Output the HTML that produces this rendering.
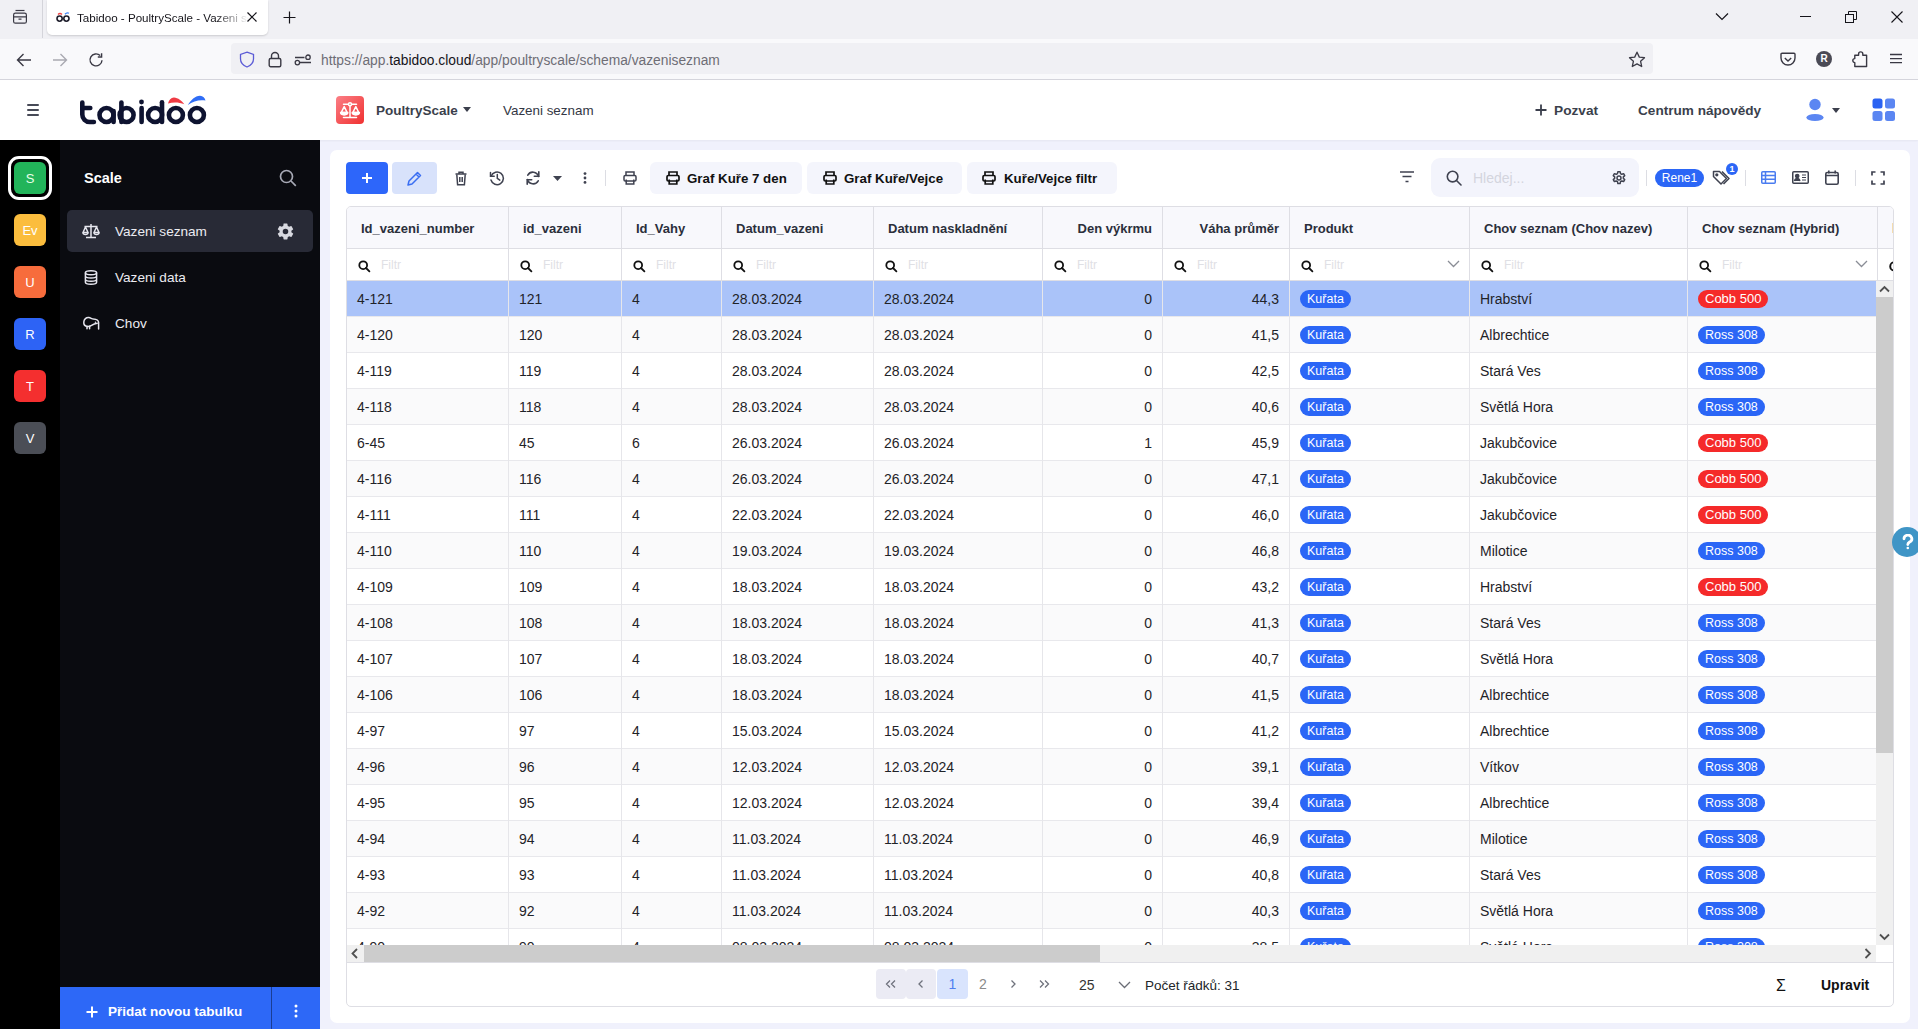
<!DOCTYPE html>
<html><head><meta charset="utf-8">
<style>
*{box-sizing:border-box;margin:0;padding:0}
html,body{width:1918px;height:1029px;overflow:hidden;font-family:"Liberation Sans",sans-serif;background:#f0f1fc;color:#212529}
.abs{position:absolute}
svg{display:block}
/* browser chrome */
#tabbar{position:absolute;left:0;top:0;width:1918px;height:39px;background:#f0f0f4}
#navbar{position:absolute;left:0;top:39px;width:1918px;height:41px;background:#f9f9fb;border-bottom:1px solid #d5d5dc}
#tab{position:absolute;left:47px;top:0;width:221px;height:35px;background:#fff;border-radius:0 0 5px 5px;box-shadow:0 1px 2px rgba(0,0,0,.15)}
#url{position:absolute;left:231px;top:43px;width:1422px;height:31px;background:#f0f0f4;border-radius:4px}
/* app header */
#apphdr{position:absolute;left:0;top:80px;width:1918px;height:60px;background:#fff;box-shadow:0 1px 2px rgba(0,0,0,.05)}
/* sidebar */
#strip{position:absolute;left:0;top:140px;width:60px;height:889px;background:#000}
#side{position:absolute;left:60px;top:140px;width:260px;height:889px;background:#0a0b10}
.appic{position:absolute;left:14px;width:32px;height:32px;border-radius:6px;color:#fff;font-size:13px;text-align:center;line-height:34px}
/* card */
#card{position:absolute;left:330px;top:150px;width:1580px;height:873px;background:#fff;border-radius:7px}
.hd{font-size:13px;font-weight:bold;color:#2b2f3b;line-height:18px;white-space:nowrap}
.flt{font-size:12px;color:#dfe0e5;line-height:18px}
.td{font-size:14px;color:#1f2328;line-height:18px;white-space:nowrap}
.badge{height:18px;border-radius:9px;color:#fff;font-size:12.5px;line-height:18px;padding:0 7px;white-space:nowrap}
.pg{height:30px;border-radius:4px;text-align:center;line-height:30px;font-size:14px}
.tbt{font-size:13.3px;font-weight:bold;color:#111;line-height:18px;white-space:nowrap}
</style></head>
<body>

<div id="tabbar"></div>
<svg class="abs" style="left:12px;top:9px" width="16" height="16" viewBox="0 0 16 16" fill="none" stroke="#3a3944" stroke-width="1.2"><path d="M3.5 1.5h9"/><rect x="1.6" y="4.2" width="12.8" height="10" rx="1.8"/><path d="M1.6 7.8h12.8M6.5 10.2h3"/></svg>
<div class="abs" style="left:42px;top:0;width:1px;height:38px;background:#d4d4da"></div>
<div id="tab"></div>
<svg class="abs" style="left:56px;top:11px" width="14" height="12" viewBox="0 0 14 12"><path d="M2 3.5 Q4 1.5 6 3.5" stroke="#ef4444" stroke-width="1.3" fill="none"/><path d="M9 3.2 Q11 1 13 2.3" stroke="#3b82f6" stroke-width="1.3" fill="none"/><circle cx="3.6" cy="7.6" r="2.6" stroke="#1d1d2b" stroke-width="1.6" fill="none"/><circle cx="10.4" cy="7.6" r="2.6" stroke="#1d1d2b" stroke-width="1.6" fill="none"/></svg>
<div class="abs" style="left:77px;top:10px;width:172px;height:16px;overflow:hidden;white-space:nowrap;font-size:11.6px;color:#15141a;line-height:16px;-webkit-mask-image:linear-gradient(90deg,#000 80%,transparent 100%)">Tabidoo - PoultryScale - Vazeni seznam</div>
<svg class="abs" style="left:246px;top:11px" width="12" height="12" viewBox="0 0 12 12" stroke="#15141a" stroke-width="1.2"><path d="M1.5 1.5l9 9M10.5 1.5l-9 9"/></svg>
<svg class="abs" style="left:283px;top:11px" width="13" height="13" viewBox="0 0 13 13" stroke="#15141a" stroke-width="1.2"><path d="M6.5 0.5v12M0.5 6.5h12"/></svg>
<svg class="abs" style="left:1715px;top:12px" width="14" height="9" viewBox="0 0 14 9" fill="none" stroke="#15141a" stroke-width="1.2"><path d="M1 1.5l6 6 6-6"/></svg>
<div class="abs" style="left:1800px;top:16px;width:11px;height:1px;background:#15141a"></div>
<svg class="abs" style="left:1845px;top:11px" width="12" height="12" viewBox="0 0 12 12" fill="none" stroke="#15141a" stroke-width="1"><rect x="0.5" y="3.5" width="8" height="8"/><path d="M3.5 3.5V0.5h8v8h-3"/></svg>
<svg class="abs" style="left:1891px;top:11px" width="12" height="12" viewBox="0 0 12 12" stroke="#15141a" stroke-width="1.1"><path d="M0.5 0.5l11 11M11.5 0.5l-11 11"/></svg>
<div id="navbar"></div>
<svg class="abs" style="left:16px;top:52px" width="16" height="16" viewBox="0 0 16 16" fill="none" stroke="#3a3944" stroke-width="1.4"><path d="M15 8H1.5M7.5 2L1.5 8l6 6"/></svg>
<svg class="abs" style="left:52px;top:52px" width="16" height="16" viewBox="0 0 16 16" fill="none" stroke="#a9a9b1" stroke-width="1.4"><path d="M1 8h13.5M8.5 2l6 6-6 6"/></svg>
<svg class="abs" style="left:88px;top:52px" width="16" height="16" viewBox="0 0 16 16" fill="none" stroke="#3a3944" stroke-width="1.4"><path d="M14 8.2A6 6 0 1 1 12.2 3.6"/><path d="M13.6 1.2v3.8H9.8" /></svg>
<div id="url"></div>
<svg class="abs" style="left:239px;top:51px" width="16" height="17" viewBox="0 0 16 17" fill="none" stroke="#5b5bd6" stroke-width="1.3"><path d="M8 1.2L14.5 3.5V8c0 4-3 6.5-6.5 8C4.5 14.5 1.5 12 1.5 8V3.5z"/></svg>
<svg class="abs" style="left:268px;top:51px" width="14" height="17" viewBox="0 0 14 17" fill="none" stroke="#3a3944" stroke-width="1.4"><path d="M3.5 7.5V5a3.5 3.5 0 0 1 7 0v2.5"/><rect x="1.2" y="7.5" width="11.6" height="8.3" rx="1.5"/></svg>
<svg class="abs" style="left:294px;top:54px" width="18" height="12" viewBox="0 0 18 12" fill="none" stroke="#3a3944" stroke-width="1.3"><path d="M1 3.5h9.5M6 8.5h11"/><circle cx="14" cy="3.2" r="2.2"/><circle cx="3.4" cy="8.6" r="2.2"/></svg>
<div class="abs" style="left:321px;top:52px;font-size:13.8px;line-height:18px;white-space:nowrap;color:#6e6d75"><span>https://app.</span><span style="color:#15141a">tabidoo.cloud</span><span>/app/poultryscale/schema/vazeniseznam</span></div>
<svg class="abs" style="left:1628px;top:51px" width="18" height="17" viewBox="0 0 18 17" fill="none" stroke="#3a3944" stroke-width="1.3" stroke-linejoin="round"><path d="M9 1.2l2.3 4.9 5.2.6-3.9 3.6 1.1 5.2L9 12.9l-4.7 2.6 1.1-5.2L1.5 6.7l5.2-.6z"/></svg>
<svg class="abs" style="left:1780px;top:52px" width="16" height="15" viewBox="0 0 16 15" fill="none" stroke="#3a3944" stroke-width="1.4"><path d="M2 1.2h12a1 1 0 0 1 1 1V6a7 7 0 0 1-14 0V2.2a1 1 0 0 1 1-1z"/><path d="M4.8 6l3.2 3 3.2-3"/></svg>
<div class="abs" style="left:1816px;top:51px;width:16px;height:16px;border-radius:50%;background:#4a4a55;color:#fff;font-size:10px;font-weight:bold;text-align:center;line-height:16px">R</div>
<svg class="abs" style="left:1852px;top:50px" width="17" height="18" viewBox="0 0 17 18" fill="none" stroke="#3a3944" stroke-width="1.4" stroke-linejoin="round"><path d="M2.8 16.5V12.6A2 2 0 0 1 2.8 8.6V5.2H6.6V4A2.1 2.1 0 0 1 10.8 4V5.2H14.6V16.5Z"/></svg>
<svg class="abs" style="left:1889px;top:53px" width="14" height="12" viewBox="0 0 14 12" stroke="#3a3944" stroke-width="1.3"><path d="M1 1.5h12M1 5.6h12M1 9.7h12"/></svg>
<div id="apphdr"></div>
<div class="abs" style="left:27px;top:104px;width:12px;height:2px;background:#474a57;border-radius:1px"></div>
<div class="abs" style="left:27px;top:109px;width:12px;height:2px;background:#474a57;border-radius:1px"></div>
<div class="abs" style="left:27px;top:114px;width:12px;height:2px;background:#474a57;border-radius:1px"></div>
<svg class="abs" style="left:78px;top:93px" width="132" height="36" viewBox="78 93 132 36" fill="none" stroke="#0e1330" stroke-width="4.6" stroke-linecap="round">
<path d="M82.3 102.5V114.5a7.5 7.5 0 0 0 7.5 7.5H93.9"/><path d="M82.3 108H90.3"/>
<circle cx="106.5" cy="115" r="7"/><path d="M113.6 111V122"/>
<path d="M121.4 102.5V122"/><circle cx="126.6" cy="115" r="7"/>
<path d="M141.6 108V122"/><circle cx="141.5" cy="102" r="2.4" fill="#0e1330" stroke="none"/>
<circle cx="155.1" cy="115" r="7"/><path d="M162 102.3V122"/>
<circle cx="175.9" cy="115" r="7"/>
<circle cx="196.9" cy="115" r="7"/>
<path d="M168 103.5C169 100 171 97.5 174 97.6C178 97.8 182 101 184.3 104.3C179 102 173 102 168 103.5Z" fill="#ef3b44" stroke="none"/>
<path d="M187.8 105C191 100 195 96 200 95.8C203 95.8 205 98 205.5 100.6C200 99.5 193 101 187.8 105Z" fill="#2f6df6" stroke="none"/>
</svg>
<div class="abs" style="left:336px;top:96px;width:28px;height:28px;border-radius:4px;background:linear-gradient(135deg,#fb7f86,#f03030)"></div>
<svg class="abs" style="left:338px;top:98px" width="24" height="24" viewBox="0 0 24 24" fill="none" stroke="#fff" stroke-width="1.5" stroke-linejoin="round" stroke-linecap="round"><path d="M5.5 6.2h13M12 7.5v11.5M5.5 19.4h13"/><circle cx="12" cy="6.2" r="1.5" fill="#f25a5a"/><path d="M6.2 8.6L3.2 14.6h6z M17.8 8.6l-3 6h6z"/><path d="M2.6 14.6h7.2a3.6 2.3 0 0 1-7.2 0z M14.2 14.6h7.2a3.6 2.3 0 0 1-7.2 0z" fill="#fff"/></svg>
<div class="abs" style="left:376px;top:102px;font-size:13.5px;font-weight:bold;color:#3b3f4c;line-height:18px;white-space:nowrap">PoultryScale</div>
<svg class="abs" style="left:463px;top:107px" width="8" height="5" viewBox="0 0 8 5"><path d="M0 0h8L4 5z" fill="#3b3f4c"/></svg>
<div class="abs" style="left:503px;top:102px;font-size:13.4px;color:#333744;line-height:18px;white-space:nowrap">Vazeni seznam</div>
<svg class="abs" style="left:1535px;top:104px" width="12" height="12" viewBox="0 0 12 12" stroke="#3b3f4c" stroke-width="1.8"><path d="M6 0.5v11M0.5 6h11"/></svg>
<div class="abs" style="left:1554px;top:102px;font-size:13.7px;font-weight:bold;color:#3b3f4c;line-height:18px;white-space:nowrap">Pozvat</div>
<div class="abs" style="left:1638px;top:102px;font-size:13.6px;font-weight:bold;color:#3b3f4c;line-height:18px;white-space:nowrap">Centrum nápovědy</div>
<svg class="abs" style="left:1805px;top:98px" width="20" height="24" viewBox="0 0 20 24" fill="#5b86f2"><circle cx="10" cy="6.5" r="5.7"/><ellipse cx="10" cy="19.5" rx="8.6" ry="3.6"/></svg>
<svg class="abs" style="left:1832px;top:108px" width="8" height="5" viewBox="0 0 8 5"><path d="M0 0h8L4 5z" fill="#3b3f4c"/></svg>
<svg class="abs" style="left:1872px;top:98px" width="24" height="24" viewBox="0 0 24 24"><rect x="0.5" y="0.5" width="10" height="10" rx="2.5" fill="#2a62f2"/><rect x="13" y="0.5" width="10" height="10" rx="2.5" fill="#5b86f2"/><rect x="0.5" y="13" width="10" height="10" rx="2.5" fill="#5b86f2"/><rect x="13" y="13" width="10" height="10" rx="2.5" fill="#5b86f2"/></svg>
<div id="strip"></div>
<div class="abs" style="left:8px;top:156px;width:44px;height:44px;border:3px solid #fff;border-radius:11px"></div>
<div class="appic" style="top:162px;background:#22b45a;color:#e8ffe8">S</div>
<div class="appic" style="top:214px;background:#fbbd3d">Ev</div>
<div class="appic" style="top:266px;background:#f76c3c">U</div>
<div class="appic" style="top:318px;background:#2d63f5">R</div>
<div class="appic" style="top:370px;background:#f42f2f">T</div>
<div class="appic" style="top:422px;background:#4b4e56">V</div>
<div id="side"></div>
<div class="abs" style="left:84px;top:169px;font-size:14.5px;font-weight:bold;color:#fff;line-height:18px">Scale</div>
<svg class="abs" style="left:279px;top:169px" width="18" height="18" viewBox="0 0 18 18" fill="none" stroke="#a7a9b5" stroke-width="1.7"><circle cx="7.5" cy="7.5" r="6"/><path d="M12 12l4.8 4.8"/></svg>
<div class="abs" style="left:67px;top:210px;width:246px;height:42px;border-radius:5px;background:#282a36"></div>
<svg class="abs" style="left:82px;top:223px" width="18" height="16" viewBox="0 0 18 16" fill="none" stroke="#e6e6ee" stroke-width="1.5" stroke-linejoin="round"><path d="M9 1v13M4 14.5h10M2.5 3.5h13"/><path d="M3.5 4L1 9.5h5z M14.5 4L12 9.5h5z"/><path d="M1 9.5a2.5 2 0 0 0 5 0M12 9.5a2.5 2 0 0 0 5 0"/></svg>
<div class="abs" style="left:115px;top:223px;font-size:13.6px;color:#ececf2;line-height:18px;white-space:nowrap">Vazeni seznam</div>
<svg class="abs" style="left:276px;top:222px" width="19" height="19" viewBox="0 0 24 24" fill="#d8d9e0"><path d="M19.4 13c.04-.33.06-.66.06-1s-.02-.67-.06-1l2.1-1.65c.19-.15.24-.42.12-.64l-2-3.46c-.12-.22-.39-.3-.61-.22l-2.49 1c-.52-.4-1.08-.73-1.69-.98l-.38-2.65A.49.49 0 0 0 14 2h-4c-.25 0-.46.18-.49.42l-.38 2.65c-.61.25-1.17.59-1.69.98l-2.49-1c-.23-.09-.49 0-.61.22l-2 3.46c-.13.22-.07.49.12.64L4.57 11c-.04.33-.07.67-.07 1s.03.67.07 1l-2.11 1.65c-.19.15-.24.42-.12.64l2 3.46c.12.22.39.3.61.22l2.49-1c.52.4 1.08.73 1.69.98l.38 2.65c.03.24.24.42.49.42h4c.25 0 .46-.18.49-.42l.38-2.65c.61-.25 1.17-.59 1.69-.98l2.49 1c.23.09.49 0 .61-.22l2-3.46c.12-.22.07-.49-.12-.64L19.4 13zM12 15.5A3.5 3.5 0 1 1 12 8.5a3.5 3.5 0 0 1 0 7z"/></svg>
<svg class="abs" style="left:84px;top:270px" width="14" height="15" viewBox="0 0 14 15" fill="none" stroke="#e6e6ee" stroke-width="1.5"><ellipse cx="7" cy="2.8" rx="5.6" ry="2"/><path d="M1.4 2.8v9.4c0 1.1 2.5 2 5.6 2s5.6-.9 5.6-2V2.8M1.4 6c0 1.1 2.5 2 5.6 2s5.6-.9 5.6-2M1.4 9.2c0 1.1 2.5 2 5.6 2s5.6-.9 5.6-2"/></svg>
<div class="abs" style="left:115px;top:269px;font-size:13.6px;color:#ececf2;line-height:18px;white-space:nowrap">Vazeni data</div>
<svg class="abs" style="left:80px;top:312px" width="24" height="22" viewBox="0 0 24 22" fill="none" stroke="#e6e6ee" stroke-width="1.5" stroke-linejoin="round" stroke-linecap="round"><path d="M7.5 14.5C4.8 14.2 3.6 12 3.8 10 4 7.2 6.2 5.3 8.8 5.6 10.6 5.8 11.6 6.8 13.5 7.1 15.5 7.3 18.3 7.6 18.6 10.3V17"/><path d="M17.2 11.2C15 11.4 13.2 12.2 11.5 13.4 10.3 14.2 9 14.6 7.5 14.5"/><path d="M7 14.5V16.8M9.6 14.3V16.8"/><circle cx="15.4" cy="10.3" r=".7" fill="#e6e6ee" stroke="none"/></svg>
<div class="abs" style="left:115px;top:315px;font-size:13.6px;color:#ececf2;line-height:18px;white-space:nowrap">Chov</div>
<div class="abs" style="left:60px;top:987px;width:260px;height:42px;background:#2d68f7"></div>
<div class="abs" style="left:271px;top:987px;width:1px;height:42px;background:#1a3d94"></div>
<svg class="abs" style="left:86px;top:1006px" width="12" height="12" viewBox="0 0 12 12" stroke="#fff" stroke-width="2"><path d="M6 0.5v11M0.5 6h11"/></svg>
<div class="abs" style="left:108px;top:1003px;font-size:13.5px;font-weight:bold;color:#fff;line-height:18px;white-space:nowrap">Přidat novou tabulku</div>
<svg class="abs" style="left:293px;top:1004px" width="6" height="14" viewBox="0 0 6 14" fill="#fff"><circle cx="3" cy="2" r="1.5"/><circle cx="3" cy="7" r="1.5"/><circle cx="3" cy="12" r="1.5"/></svg>
<div id="card"></div>
<!--TOOLBAR-->
<div class="abs" style="left:346px;top:162px;width:42px;height:32px;border-radius:4px;background:#2d66fa"></div>
<svg class="abs" style="left:362px;top:173px" width="10" height="10" viewBox="0 0 10 10" stroke="#fff" stroke-width="2"><path d="M5 0v10M0 5h10"/></svg>
<div class="abs" style="left:392px;top:162px;width:45px;height:32px;border-radius:4px;background:#d8e2fb"></div>
<svg class="abs" style="left:407px;top:171px" width="15" height="15" viewBox="0 0 15 15" fill="none" stroke="#3a6ef2" stroke-width="1.5" stroke-linejoin="round"><path d="M10.5 1.5l3 3-8.5 8.5-4 1 1-4z M9 3l3 3"/></svg>
<svg class="abs" style="left:455px;top:171px" width="12" height="15" viewBox="0 0 12 15" fill="none" stroke="#3f4250" stroke-width="1.5"><path d="M0.5 3h11M4 3V1.2h4V3"/><path d="M1.8 3.5l.8 10.3h6.8l.8-10.3"/><path d="M4.8 6v5M7.2 6v5"/></svg>
<svg class="abs" style="left:489px;top:170px" width="16" height="16" viewBox="0 0 16 16" fill="none" stroke="#3f4250" stroke-width="1.5" stroke-linecap="round"><path d="M2.2 6A6.3 6.3 0 1 1 2 10"/><path d="M1.5 2.5V6.2h3.7"/><path d="M8.3 4.5V8.3l2.5 1.8"/></svg>
<svg class="abs" style="left:525px;top:170px" width="16" height="16" viewBox="0 0 16 16" fill="none" stroke="#3f4250" stroke-width="1.6" stroke-linecap="round"><path d="M13.5 6.5A5.8 5.8 0 0 0 2.8 5.2"/><path d="M2.5 9.5A5.8 5.8 0 0 0 13.2 10.8"/><path d="M13.8 1.8v4.5H9.3" /><path d="M2.2 14.2V9.7h4.5"/></svg>
<svg class="abs" style="left:553px;top:176px" width="9" height="5" viewBox="0 0 9 5"><path d="M0 0h9L4.5 5z" fill="#3f4250"/></svg>
<svg class="abs" style="left:583px;top:172px" width="4" height="12" viewBox="0 0 4 12" fill="#3f4250"><circle cx="2" cy="1.6" r="1.4"/><circle cx="2" cy="6" r="1.4"/><circle cx="2" cy="10.4" r="1.4"/></svg>
<div class="abs" style="left:605px;top:170px;width:1px;height:16px;background:#dcdde3"></div>
<svg class="abs" style="left:623px;top:171px" width="14" height="14" viewBox="0 0 14 14" fill="none" stroke="#3f4250" stroke-width="1.5"><path d="M3 4.5V1h8v3.5"/><rect x="1" y="4.5" width="12" height="5.5" rx="1.3"/><path d="M3.2 8.5V13h7.6V8.5"/></svg>
<div class="abs" style="left:650px;top:162px;width:152px;height:32px;border-radius:6px;background:#f4f5fc"></div>
<svg class="abs" style="left:666px;top:171px" width="14" height="14" viewBox="0 0 14 14" fill="none" stroke="#111" stroke-width="1.7"><path d="M3 4.5V1h8v3.5"/><rect x="1" y="4.5" width="12" height="5.5" rx="1.3"/><path d="M3.2 8.5V13h7.6V8.5"/></svg>
<div class="abs tbt" style="left:687px;top:170px">Graf Kuře 7 den</div>
<div class="abs" style="left:807px;top:162px;width:155px;height:32px;border-radius:6px;background:#f4f5fc"></div>
<svg class="abs" style="left:823px;top:171px" width="14" height="14" viewBox="0 0 14 14" fill="none" stroke="#111" stroke-width="1.7"><path d="M3 4.5V1h8v3.5"/><rect x="1" y="4.5" width="12" height="5.5" rx="1.3"/><path d="M3.2 8.5V13h7.6V8.5"/></svg>
<div class="abs tbt" style="left:844px;top:170px">Graf Kuře/Vejce</div>
<div class="abs" style="left:967px;top:162px;width:150px;height:32px;border-radius:6px;background:#f4f5fc"></div>
<svg class="abs" style="left:982px;top:171px" width="14" height="14" viewBox="0 0 14 14" fill="none" stroke="#111" stroke-width="1.7"><path d="M3 4.5V1h8v3.5"/><rect x="1" y="4.5" width="12" height="5.5" rx="1.3"/><path d="M3.2 8.5V13h7.6V8.5"/></svg>
<div class="abs tbt" style="left:1004px;top:170px">Kuře/Vejce filtr</div>
<svg class="abs" style="left:1400px;top:171px" width="14" height="12" viewBox="0 0 14 12" stroke="#3f4250" stroke-width="1.5"><path d="M0 1h14M2.5 5.5h9M5.5 10.5h3"/></svg>
<div class="abs" style="left:1431px;top:158px;width:208px;height:39px;border-radius:9px;background:#f3f4fc"></div>
<svg class="abs" style="left:1446px;top:170px" width="16" height="16" viewBox="0 0 16 16" fill="none" stroke="#3f4250" stroke-width="1.6"><circle cx="6.6" cy="6.6" r="5.3"/><path d="M10.5 10.5l4.5 4.5" stroke-linecap="round"/></svg>
<div class="abs" style="left:1473px;top:169px;font-size:14px;color:#d3d5de;line-height:18px">Hledej...</div>
<svg class="abs" style="left:1611px;top:170px" width="16" height="16" viewBox="0 0 24 24" fill="none" stroke="#3f4250" stroke-width="2.2"><path d="M10.3 2.5h3.4l.6 2.8 1.9 1.1 2.7-.9 1.7 2.9-2.1 1.9v2.2l2.1 1.9-1.7 2.9-2.7-.9-1.9 1.1-.6 2.8h-3.4l-.6-2.8-1.9-1.1-2.7.9-1.7-2.9 2.1-1.9v-2.2L3.4 8.4l1.7-2.9 2.7.9 1.9-1.1z" stroke-linejoin="round"/><circle cx="12" cy="12" r="3"/></svg>
<div class="abs" style="left:1646px;top:170px;width:1px;height:16px;background:#dcdde3"></div>
<div class="abs" style="left:1655px;top:169px;width:49px;height:18px;border-radius:9px;background:#2b66f6;color:#fff;font-size:12px;line-height:18px;text-align:center">Rene1</div>
<svg class="abs" style="left:1712px;top:170px" width="20" height="16" viewBox="0 0 20 16" fill="none" stroke="#3f4250" stroke-width="1.5" stroke-linejoin="round"><path d="M1.5 1.5h6l7 7-5.5 5.5-7.5-7.5z"/><path d="M10 1.5l7 7-5.5 5.5"/><circle cx="4.8" cy="4.8" r=".9" fill="#3f4250"/></svg>
<div class="abs" style="left:1726px;top:163px;width:12px;height:12px;border-radius:50%;background:#2b66f6;color:#fff;font-size:9px;font-weight:bold;line-height:12px;text-align:center">1</div>
<div class="abs" style="left:1745px;top:170px;width:1px;height:16px;background:#dcdde3"></div>
<svg class="abs" style="left:1761px;top:171px" width="15" height="13" viewBox="0 0 15 13" fill="none" stroke="#4a7cf0" stroke-width="1.5"><rect x="0.75" y="0.75" width="13.5" height="11.5" rx="1"/><path d="M0.75 4.5h13.5M0.75 8.3h13.5M4.5 0.75v11.5"/></svg>
<svg class="abs" style="left:1792px;top:171px" width="17" height="13" viewBox="0 0 17 13" fill="none" stroke="#3f4250" stroke-width="1.5"><rect x="0.75" y="0.75" width="15.5" height="11.5" rx="1"/><circle cx="5.2" cy="5" r="1.6" fill="#3f4250"/><path d="M2.5 10c.5-2 1.5-2.6 2.7-2.6S7.4 8 7.9 10" fill="#3f4250"/><path d="M10 4h4M10 6.5h4M10 9h4" stroke-width="1.2"/></svg>
<svg class="abs" style="left:1825px;top:170px" width="14" height="15" viewBox="0 0 14 15" fill="none" stroke="#3f4250" stroke-width="1.6"><rect x="0.8" y="2.5" width="12.4" height="11.7" rx="1.5"/><path d="M0.8 5.5h12.4M3.8 0.5v3M10.2 0.5v3"/></svg>
<div class="abs" style="left:1855px;top:170px;width:1px;height:16px;background:#dcdde3"></div>
<svg class="abs" style="left:1871px;top:171px" width="14" height="14" viewBox="0 0 14 14" fill="none" stroke="#3f4250" stroke-width="1.7"><path d="M1 4.5V1h3.5M9.5 1H13v3.5M13 9.5V13H9.5M4.5 13H1V9.5"/></svg>
<!--/TOOLBAR-->
<!--TABLE-->
<div id="tbl" class="abs" style="left:346px;top:206px;width:1548px;height:801px;border:1px solid #dedee4;border-radius:5px;overflow:hidden;background:#fff">
<div class="abs" style="left:0;top:0;width:1546px;height:42px;background:#f8f8fc;border-bottom:1px solid #dedee4"></div>
<div class="abs" style="left:0;top:42px;width:1546px;height:32px;background:#fff;border-bottom:1px solid #dedee4"></div>
<div class="abs hd" style="left:14px;top:13px">Id_vazeni_number</div>
<svg class="abs" style="left:11px;top:53px" width="13" height="13" viewBox="0 0 13 13" fill="none" stroke="#111" stroke-width="1.8"><circle cx="5.2" cy="5.2" r="3.9"/><path d="M8 8l3.4 3.4" stroke-linecap="round"/></svg>
<div class="abs flt" style="left:34px;top:49px">Filtr</div>
<div class="abs hd" style="left:176px;top:13px">id_vazeni</div>
<svg class="abs" style="left:173px;top:53px" width="13" height="13" viewBox="0 0 13 13" fill="none" stroke="#111" stroke-width="1.8"><circle cx="5.2" cy="5.2" r="3.9"/><path d="M8 8l3.4 3.4" stroke-linecap="round"/></svg>
<div class="abs flt" style="left:196px;top:49px">Filtr</div>
<div class="abs hd" style="left:289px;top:13px">Id_Vahy</div>
<svg class="abs" style="left:286px;top:53px" width="13" height="13" viewBox="0 0 13 13" fill="none" stroke="#111" stroke-width="1.8"><circle cx="5.2" cy="5.2" r="3.9"/><path d="M8 8l3.4 3.4" stroke-linecap="round"/></svg>
<div class="abs flt" style="left:309px;top:49px">Filtr</div>
<div class="abs hd" style="left:389px;top:13px">Datum_vazeni</div>
<svg class="abs" style="left:386px;top:53px" width="13" height="13" viewBox="0 0 13 13" fill="none" stroke="#111" stroke-width="1.8"><circle cx="5.2" cy="5.2" r="3.9"/><path d="M8 8l3.4 3.4" stroke-linecap="round"/></svg>
<div class="abs flt" style="left:409px;top:49px">Filtr</div>
<div class="abs hd" style="left:541px;top:13px">Datum naskladnění</div>
<svg class="abs" style="left:538px;top:53px" width="13" height="13" viewBox="0 0 13 13" fill="none" stroke="#111" stroke-width="1.8"><circle cx="5.2" cy="5.2" r="3.9"/><path d="M8 8l3.4 3.4" stroke-linecap="round"/></svg>
<div class="abs flt" style="left:561px;top:49px">Filtr</div>
<div class="abs hd" style="left:696px;top:13px;width:109px;text-align:right">Den výkrmu</div>
<svg class="abs" style="left:707px;top:53px" width="13" height="13" viewBox="0 0 13 13" fill="none" stroke="#111" stroke-width="1.8"><circle cx="5.2" cy="5.2" r="3.9"/><path d="M8 8l3.4 3.4" stroke-linecap="round"/></svg>
<div class="abs flt" style="left:730px;top:49px">Filtr</div>
<div class="abs hd" style="left:816px;top:13px;width:116px;text-align:right">Váha průměr</div>
<svg class="abs" style="left:827px;top:53px" width="13" height="13" viewBox="0 0 13 13" fill="none" stroke="#111" stroke-width="1.8"><circle cx="5.2" cy="5.2" r="3.9"/><path d="M8 8l3.4 3.4" stroke-linecap="round"/></svg>
<div class="abs flt" style="left:850px;top:49px">Filtr</div>
<div class="abs hd" style="left:957px;top:13px">Produkt</div>
<svg class="abs" style="left:954px;top:53px" width="13" height="13" viewBox="0 0 13 13" fill="none" stroke="#111" stroke-width="1.8"><circle cx="5.2" cy="5.2" r="3.9"/><path d="M8 8l3.4 3.4" stroke-linecap="round"/></svg>
<div class="abs flt" style="left:977px;top:49px">Filtr</div>
<svg class="abs" style="left:1100px;top:53px" width="13" height="8" viewBox="0 0 13 8" fill="none" stroke="#8a8d96" stroke-width="1.3"><path d="M1 1l5.5 5.5L12 1"/></svg>
<div class="abs hd" style="left:1137px;top:13px">Chov seznam (Chov nazev)</div>
<svg class="abs" style="left:1134px;top:53px" width="13" height="13" viewBox="0 0 13 13" fill="none" stroke="#111" stroke-width="1.8"><circle cx="5.2" cy="5.2" r="3.9"/><path d="M8 8l3.4 3.4" stroke-linecap="round"/></svg>
<div class="abs flt" style="left:1157px;top:49px">Filtr</div>
<div class="abs hd" style="left:1355px;top:13px">Chov seznam (Hybrid)</div>
<svg class="abs" style="left:1352px;top:53px" width="13" height="13" viewBox="0 0 13 13" fill="none" stroke="#111" stroke-width="1.8"><circle cx="5.2" cy="5.2" r="3.9"/><path d="M8 8l3.4 3.4" stroke-linecap="round"/></svg>
<div class="abs flt" style="left:1375px;top:49px">Filtr</div>
<svg class="abs" style="left:1508px;top:53px" width="13" height="8" viewBox="0 0 13 8" fill="none" stroke="#8a8d96" stroke-width="1.3"><path d="M1 1l5.5 5.5L12 1"/></svg>
<div class="abs" style="left:1545px;top:16px;width:3px;height:10px;background:#f2d49a;opacity:.8"></div>
<svg class="abs" style="left:1542px;top:54px" width="13" height="13" viewBox="0 0 13 13" fill="none" stroke="#111" stroke-width="1.9"><circle cx="5.4" cy="5.4" r="4.2"/></svg>
<div class="abs" style="left:161px;top:0;width:1px;height:74px;background:#dedee4"></div>
<div class="abs" style="left:274px;top:0;width:1px;height:74px;background:#dedee4"></div>
<div class="abs" style="left:374px;top:0;width:1px;height:74px;background:#dedee4"></div>
<div class="abs" style="left:526px;top:0;width:1px;height:74px;background:#dedee4"></div>
<div class="abs" style="left:695px;top:0;width:1px;height:74px;background:#dedee4"></div>
<div class="abs" style="left:815px;top:0;width:1px;height:74px;background:#dedee4"></div>
<div class="abs" style="left:942px;top:0;width:1px;height:74px;background:#dedee4"></div>
<div class="abs" style="left:1122px;top:0;width:1px;height:74px;background:#dedee4"></div>
<div class="abs" style="left:1340px;top:0;width:1px;height:74px;background:#dedee4"></div>
<div class="abs" style="left:1530px;top:0;width:1px;height:74px;background:#dedee4"></div>
<div class="abs" style="left:0;top:74px;width:1529px;height:664px;overflow:hidden">
<div class="abs" style="left:0;top:0px;width:1529px;height:36px;background:#aac3f9;border-bottom:1px solid #e8e8ec"></div>
<div class="abs td" style="left:10px;top:9px">4-121</div>
<div class="abs td" style="left:172px;top:9px">121</div>
<div class="abs td" style="left:285px;top:9px">4</div>
<div class="abs td" style="left:385px;top:9px">28.03.2024</div>
<div class="abs td" style="left:537px;top:9px">28.03.2024</div>
<div class="abs td" style="left:696px;top:9px;width:109px;text-align:right">0</div>
<div class="abs td" style="left:816px;top:9px;width:116px;text-align:right">44,3</div>
<div class="abs badge" style="left:953px;top:9px;background:#2b66f6">Kuřata</div>
<div class="abs td" style="left:1133px;top:9px">Hrabství</div>
<div class="abs badge" style="left:1351px;top:9px;background:#f52a2a;font-size:13px">Cobb 500</div>
<div class="abs" style="left:0;top:36px;width:1529px;height:36px;background:#fafafb;border-bottom:1px solid #e8e8ec"></div>
<div class="abs td" style="left:10px;top:45px">4-120</div>
<div class="abs td" style="left:172px;top:45px">120</div>
<div class="abs td" style="left:285px;top:45px">4</div>
<div class="abs td" style="left:385px;top:45px">28.03.2024</div>
<div class="abs td" style="left:537px;top:45px">28.03.2024</div>
<div class="abs td" style="left:696px;top:45px;width:109px;text-align:right">0</div>
<div class="abs td" style="left:816px;top:45px;width:116px;text-align:right">41,5</div>
<div class="abs badge" style="left:953px;top:45px;background:#2b66f6">Kuřata</div>
<div class="abs td" style="left:1133px;top:45px">Albrechtice</div>
<div class="abs badge" style="left:1351px;top:45px;background:#2b66f6">Ross 308</div>
<div class="abs" style="left:0;top:72px;width:1529px;height:36px;background:#fff;border-bottom:1px solid #e8e8ec"></div>
<div class="abs td" style="left:10px;top:81px">4-119</div>
<div class="abs td" style="left:172px;top:81px">119</div>
<div class="abs td" style="left:285px;top:81px">4</div>
<div class="abs td" style="left:385px;top:81px">28.03.2024</div>
<div class="abs td" style="left:537px;top:81px">28.03.2024</div>
<div class="abs td" style="left:696px;top:81px;width:109px;text-align:right">0</div>
<div class="abs td" style="left:816px;top:81px;width:116px;text-align:right">42,5</div>
<div class="abs badge" style="left:953px;top:81px;background:#2b66f6">Kuřata</div>
<div class="abs td" style="left:1133px;top:81px">Stará Ves</div>
<div class="abs badge" style="left:1351px;top:81px;background:#2b66f6">Ross 308</div>
<div class="abs" style="left:0;top:108px;width:1529px;height:36px;background:#fafafb;border-bottom:1px solid #e8e8ec"></div>
<div class="abs td" style="left:10px;top:117px">4-118</div>
<div class="abs td" style="left:172px;top:117px">118</div>
<div class="abs td" style="left:285px;top:117px">4</div>
<div class="abs td" style="left:385px;top:117px">28.03.2024</div>
<div class="abs td" style="left:537px;top:117px">28.03.2024</div>
<div class="abs td" style="left:696px;top:117px;width:109px;text-align:right">0</div>
<div class="abs td" style="left:816px;top:117px;width:116px;text-align:right">40,6</div>
<div class="abs badge" style="left:953px;top:117px;background:#2b66f6">Kuřata</div>
<div class="abs td" style="left:1133px;top:117px">Světlá Hora</div>
<div class="abs badge" style="left:1351px;top:117px;background:#2b66f6">Ross 308</div>
<div class="abs" style="left:0;top:144px;width:1529px;height:36px;background:#fff;border-bottom:1px solid #e8e8ec"></div>
<div class="abs td" style="left:10px;top:153px">6-45</div>
<div class="abs td" style="left:172px;top:153px">45</div>
<div class="abs td" style="left:285px;top:153px">6</div>
<div class="abs td" style="left:385px;top:153px">26.03.2024</div>
<div class="abs td" style="left:537px;top:153px">26.03.2024</div>
<div class="abs td" style="left:696px;top:153px;width:109px;text-align:right">1</div>
<div class="abs td" style="left:816px;top:153px;width:116px;text-align:right">45,9</div>
<div class="abs badge" style="left:953px;top:153px;background:#2b66f6">Kuřata</div>
<div class="abs td" style="left:1133px;top:153px">Jakubčovice</div>
<div class="abs badge" style="left:1351px;top:153px;background:#f52a2a;font-size:13px">Cobb 500</div>
<div class="abs" style="left:0;top:180px;width:1529px;height:36px;background:#fafafb;border-bottom:1px solid #e8e8ec"></div>
<div class="abs td" style="left:10px;top:189px">4-116</div>
<div class="abs td" style="left:172px;top:189px">116</div>
<div class="abs td" style="left:285px;top:189px">4</div>
<div class="abs td" style="left:385px;top:189px">26.03.2024</div>
<div class="abs td" style="left:537px;top:189px">26.03.2024</div>
<div class="abs td" style="left:696px;top:189px;width:109px;text-align:right">0</div>
<div class="abs td" style="left:816px;top:189px;width:116px;text-align:right">47,1</div>
<div class="abs badge" style="left:953px;top:189px;background:#2b66f6">Kuřata</div>
<div class="abs td" style="left:1133px;top:189px">Jakubčovice</div>
<div class="abs badge" style="left:1351px;top:189px;background:#f52a2a;font-size:13px">Cobb 500</div>
<div class="abs" style="left:0;top:216px;width:1529px;height:36px;background:#fff;border-bottom:1px solid #e8e8ec"></div>
<div class="abs td" style="left:10px;top:225px">4-111</div>
<div class="abs td" style="left:172px;top:225px">111</div>
<div class="abs td" style="left:285px;top:225px">4</div>
<div class="abs td" style="left:385px;top:225px">22.03.2024</div>
<div class="abs td" style="left:537px;top:225px">22.03.2024</div>
<div class="abs td" style="left:696px;top:225px;width:109px;text-align:right">0</div>
<div class="abs td" style="left:816px;top:225px;width:116px;text-align:right">46,0</div>
<div class="abs badge" style="left:953px;top:225px;background:#2b66f6">Kuřata</div>
<div class="abs td" style="left:1133px;top:225px">Jakubčovice</div>
<div class="abs badge" style="left:1351px;top:225px;background:#f52a2a;font-size:13px">Cobb 500</div>
<div class="abs" style="left:0;top:252px;width:1529px;height:36px;background:#fafafb;border-bottom:1px solid #e8e8ec"></div>
<div class="abs td" style="left:10px;top:261px">4-110</div>
<div class="abs td" style="left:172px;top:261px">110</div>
<div class="abs td" style="left:285px;top:261px">4</div>
<div class="abs td" style="left:385px;top:261px">19.03.2024</div>
<div class="abs td" style="left:537px;top:261px">19.03.2024</div>
<div class="abs td" style="left:696px;top:261px;width:109px;text-align:right">0</div>
<div class="abs td" style="left:816px;top:261px;width:116px;text-align:right">46,8</div>
<div class="abs badge" style="left:953px;top:261px;background:#2b66f6">Kuřata</div>
<div class="abs td" style="left:1133px;top:261px">Milotice</div>
<div class="abs badge" style="left:1351px;top:261px;background:#2b66f6">Ross 308</div>
<div class="abs" style="left:0;top:288px;width:1529px;height:36px;background:#fff;border-bottom:1px solid #e8e8ec"></div>
<div class="abs td" style="left:10px;top:297px">4-109</div>
<div class="abs td" style="left:172px;top:297px">109</div>
<div class="abs td" style="left:285px;top:297px">4</div>
<div class="abs td" style="left:385px;top:297px">18.03.2024</div>
<div class="abs td" style="left:537px;top:297px">18.03.2024</div>
<div class="abs td" style="left:696px;top:297px;width:109px;text-align:right">0</div>
<div class="abs td" style="left:816px;top:297px;width:116px;text-align:right">43,2</div>
<div class="abs badge" style="left:953px;top:297px;background:#2b66f6">Kuřata</div>
<div class="abs td" style="left:1133px;top:297px">Hrabství</div>
<div class="abs badge" style="left:1351px;top:297px;background:#f52a2a;font-size:13px">Cobb 500</div>
<div class="abs" style="left:0;top:324px;width:1529px;height:36px;background:#fafafb;border-bottom:1px solid #e8e8ec"></div>
<div class="abs td" style="left:10px;top:333px">4-108</div>
<div class="abs td" style="left:172px;top:333px">108</div>
<div class="abs td" style="left:285px;top:333px">4</div>
<div class="abs td" style="left:385px;top:333px">18.03.2024</div>
<div class="abs td" style="left:537px;top:333px">18.03.2024</div>
<div class="abs td" style="left:696px;top:333px;width:109px;text-align:right">0</div>
<div class="abs td" style="left:816px;top:333px;width:116px;text-align:right">41,3</div>
<div class="abs badge" style="left:953px;top:333px;background:#2b66f6">Kuřata</div>
<div class="abs td" style="left:1133px;top:333px">Stará Ves</div>
<div class="abs badge" style="left:1351px;top:333px;background:#2b66f6">Ross 308</div>
<div class="abs" style="left:0;top:360px;width:1529px;height:36px;background:#fff;border-bottom:1px solid #e8e8ec"></div>
<div class="abs td" style="left:10px;top:369px">4-107</div>
<div class="abs td" style="left:172px;top:369px">107</div>
<div class="abs td" style="left:285px;top:369px">4</div>
<div class="abs td" style="left:385px;top:369px">18.03.2024</div>
<div class="abs td" style="left:537px;top:369px">18.03.2024</div>
<div class="abs td" style="left:696px;top:369px;width:109px;text-align:right">0</div>
<div class="abs td" style="left:816px;top:369px;width:116px;text-align:right">40,7</div>
<div class="abs badge" style="left:953px;top:369px;background:#2b66f6">Kuřata</div>
<div class="abs td" style="left:1133px;top:369px">Světlá Hora</div>
<div class="abs badge" style="left:1351px;top:369px;background:#2b66f6">Ross 308</div>
<div class="abs" style="left:0;top:396px;width:1529px;height:36px;background:#fafafb;border-bottom:1px solid #e8e8ec"></div>
<div class="abs td" style="left:10px;top:405px">4-106</div>
<div class="abs td" style="left:172px;top:405px">106</div>
<div class="abs td" style="left:285px;top:405px">4</div>
<div class="abs td" style="left:385px;top:405px">18.03.2024</div>
<div class="abs td" style="left:537px;top:405px">18.03.2024</div>
<div class="abs td" style="left:696px;top:405px;width:109px;text-align:right">0</div>
<div class="abs td" style="left:816px;top:405px;width:116px;text-align:right">41,5</div>
<div class="abs badge" style="left:953px;top:405px;background:#2b66f6">Kuřata</div>
<div class="abs td" style="left:1133px;top:405px">Albrechtice</div>
<div class="abs badge" style="left:1351px;top:405px;background:#2b66f6">Ross 308</div>
<div class="abs" style="left:0;top:432px;width:1529px;height:36px;background:#fff;border-bottom:1px solid #e8e8ec"></div>
<div class="abs td" style="left:10px;top:441px">4-97</div>
<div class="abs td" style="left:172px;top:441px">97</div>
<div class="abs td" style="left:285px;top:441px">4</div>
<div class="abs td" style="left:385px;top:441px">15.03.2024</div>
<div class="abs td" style="left:537px;top:441px">15.03.2024</div>
<div class="abs td" style="left:696px;top:441px;width:109px;text-align:right">0</div>
<div class="abs td" style="left:816px;top:441px;width:116px;text-align:right">41,2</div>
<div class="abs badge" style="left:953px;top:441px;background:#2b66f6">Kuřata</div>
<div class="abs td" style="left:1133px;top:441px">Albrechtice</div>
<div class="abs badge" style="left:1351px;top:441px;background:#2b66f6">Ross 308</div>
<div class="abs" style="left:0;top:468px;width:1529px;height:36px;background:#fafafb;border-bottom:1px solid #e8e8ec"></div>
<div class="abs td" style="left:10px;top:477px">4-96</div>
<div class="abs td" style="left:172px;top:477px">96</div>
<div class="abs td" style="left:285px;top:477px">4</div>
<div class="abs td" style="left:385px;top:477px">12.03.2024</div>
<div class="abs td" style="left:537px;top:477px">12.03.2024</div>
<div class="abs td" style="left:696px;top:477px;width:109px;text-align:right">0</div>
<div class="abs td" style="left:816px;top:477px;width:116px;text-align:right">39,1</div>
<div class="abs badge" style="left:953px;top:477px;background:#2b66f6">Kuřata</div>
<div class="abs td" style="left:1133px;top:477px">Vítkov</div>
<div class="abs badge" style="left:1351px;top:477px;background:#2b66f6">Ross 308</div>
<div class="abs" style="left:0;top:504px;width:1529px;height:36px;background:#fff;border-bottom:1px solid #e8e8ec"></div>
<div class="abs td" style="left:10px;top:513px">4-95</div>
<div class="abs td" style="left:172px;top:513px">95</div>
<div class="abs td" style="left:285px;top:513px">4</div>
<div class="abs td" style="left:385px;top:513px">12.03.2024</div>
<div class="abs td" style="left:537px;top:513px">12.03.2024</div>
<div class="abs td" style="left:696px;top:513px;width:109px;text-align:right">0</div>
<div class="abs td" style="left:816px;top:513px;width:116px;text-align:right">39,4</div>
<div class="abs badge" style="left:953px;top:513px;background:#2b66f6">Kuřata</div>
<div class="abs td" style="left:1133px;top:513px">Albrechtice</div>
<div class="abs badge" style="left:1351px;top:513px;background:#2b66f6">Ross 308</div>
<div class="abs" style="left:0;top:540px;width:1529px;height:36px;background:#fafafb;border-bottom:1px solid #e8e8ec"></div>
<div class="abs td" style="left:10px;top:549px">4-94</div>
<div class="abs td" style="left:172px;top:549px">94</div>
<div class="abs td" style="left:285px;top:549px">4</div>
<div class="abs td" style="left:385px;top:549px">11.03.2024</div>
<div class="abs td" style="left:537px;top:549px">11.03.2024</div>
<div class="abs td" style="left:696px;top:549px;width:109px;text-align:right">0</div>
<div class="abs td" style="left:816px;top:549px;width:116px;text-align:right">46,9</div>
<div class="abs badge" style="left:953px;top:549px;background:#2b66f6">Kuřata</div>
<div class="abs td" style="left:1133px;top:549px">Milotice</div>
<div class="abs badge" style="left:1351px;top:549px;background:#2b66f6">Ross 308</div>
<div class="abs" style="left:0;top:576px;width:1529px;height:36px;background:#fff;border-bottom:1px solid #e8e8ec"></div>
<div class="abs td" style="left:10px;top:585px">4-93</div>
<div class="abs td" style="left:172px;top:585px">93</div>
<div class="abs td" style="left:285px;top:585px">4</div>
<div class="abs td" style="left:385px;top:585px">11.03.2024</div>
<div class="abs td" style="left:537px;top:585px">11.03.2024</div>
<div class="abs td" style="left:696px;top:585px;width:109px;text-align:right">0</div>
<div class="abs td" style="left:816px;top:585px;width:116px;text-align:right">40,8</div>
<div class="abs badge" style="left:953px;top:585px;background:#2b66f6">Kuřata</div>
<div class="abs td" style="left:1133px;top:585px">Stará Ves</div>
<div class="abs badge" style="left:1351px;top:585px;background:#2b66f6">Ross 308</div>
<div class="abs" style="left:0;top:612px;width:1529px;height:36px;background:#fafafb;border-bottom:1px solid #e8e8ec"></div>
<div class="abs td" style="left:10px;top:621px">4-92</div>
<div class="abs td" style="left:172px;top:621px">92</div>
<div class="abs td" style="left:285px;top:621px">4</div>
<div class="abs td" style="left:385px;top:621px">11.03.2024</div>
<div class="abs td" style="left:537px;top:621px">11.03.2024</div>
<div class="abs td" style="left:696px;top:621px;width:109px;text-align:right">0</div>
<div class="abs td" style="left:816px;top:621px;width:116px;text-align:right">40,3</div>
<div class="abs badge" style="left:953px;top:621px;background:#2b66f6">Kuřata</div>
<div class="abs td" style="left:1133px;top:621px">Světlá Hora</div>
<div class="abs badge" style="left:1351px;top:621px;background:#2b66f6">Ross 308</div>
<div class="abs" style="left:0;top:648px;width:1529px;height:36px;background:#fff;border-bottom:1px solid #e8e8ec"></div>
<div class="abs td" style="left:10px;top:657px">4-90</div>
<div class="abs td" style="left:172px;top:657px">90</div>
<div class="abs td" style="left:285px;top:657px">4</div>
<div class="abs td" style="left:385px;top:657px">08.03.2024</div>
<div class="abs td" style="left:537px;top:657px">08.03.2024</div>
<div class="abs td" style="left:696px;top:657px;width:109px;text-align:right">0</div>
<div class="abs td" style="left:816px;top:657px;width:116px;text-align:right">38,5</div>
<div class="abs badge" style="left:953px;top:657px;background:#2b66f6">Kuřata</div>
<div class="abs td" style="left:1133px;top:657px">Světlá Hora</div>
<div class="abs badge" style="left:1351px;top:657px;background:#2b66f6">Ross 308</div>
<div class="abs" style="left:161px;top:0;width:1px;height:664px;background:#e6e6ea"></div>
<div class="abs" style="left:274px;top:0;width:1px;height:664px;background:#e6e6ea"></div>
<div class="abs" style="left:374px;top:0;width:1px;height:664px;background:#e6e6ea"></div>
<div class="abs" style="left:526px;top:0;width:1px;height:664px;background:#e6e6ea"></div>
<div class="abs" style="left:695px;top:0;width:1px;height:664px;background:#e6e6ea"></div>
<div class="abs" style="left:815px;top:0;width:1px;height:664px;background:#e6e6ea"></div>
<div class="abs" style="left:942px;top:0;width:1px;height:664px;background:#e6e6ea"></div>
<div class="abs" style="left:1122px;top:0;width:1px;height:664px;background:#e6e6ea"></div>
<div class="abs" style="left:1340px;top:0;width:1px;height:664px;background:#e6e6ea"></div>
</div>
<div class="abs" style="left:1529px;top:74px;width:17px;height:664px;background:#f0f0f0"></div>
<div class="abs" style="left:1529px;top:90px;width:17px;height:456px;background:#cccccc"></div>
<svg class="abs" style="left:1529px;top:77px" width="17" height="10" viewBox="0 0 17 10" fill="none" stroke="#505050" stroke-width="1.8"><path d="M4 7.5l4.5-4.5 4.5 4.5"/></svg>
<svg class="abs" style="left:1529px;top:725px" width="17" height="10" viewBox="0 0 17 10" fill="none" stroke="#505050" stroke-width="1.8"><path d="M4 2.5l4.5 4.5 4.5-4.5"/></svg>
<div class="abs" style="left:0;top:738px;width:1529px;height:17px;background:#f0f0f0"></div>
<div class="abs" style="left:17px;top:738px;width:736px;height:17px;background:#cccccc"></div>
<svg class="abs" style="left:0;top:738px" width="17" height="17" viewBox="0 0 17 17" fill="none" stroke="#505050" stroke-width="1.8"><path d="M10 4l-4.5 4.5 4.5 4.5"/></svg>
<svg class="abs" style="left:1512px;top:738px" width="17" height="17" viewBox="0 0 17 17" fill="none" stroke="#505050" stroke-width="1.8"><path d="M6.5 4l4.5 4.5-4.5 4.5"/></svg>
<div class="abs" style="left:0;top:755px;width:1546px;height:1px;background:#dedee4"></div>
<div class="abs pg" style="left:529px;top:762px;width:30px;background:#ebebf4;color:#7a7d88"><svg style="margin:10px auto 0" width="14" height="10" viewBox="0 0 14 10" fill="none" stroke="#6f727c" stroke-width="1.3"><path d="M6 1.5L2.5 5 6 8.5M11 1.5L7.5 5 11 8.5"/></svg></div>
<div class="abs pg" style="left:559px;top:762px;width:30px;background:#ebebf4;color:#7a7d88"><svg style="margin:10px auto 0" width="10" height="10" viewBox="0 0 10 10" fill="none" stroke="#6f727c" stroke-width="1.3"><path d="M6.5 1.5L3 5l3.5 3.5"/></svg></div>
<div class="abs pg" style="left:590px;top:762px;width:31px;background:#d9e4fd;color:#4f7ff0">1</div>
<div class="abs pg" style="left:621px;top:762px;width:30px;background:transparent;color:#8a8a8a">2</div>
<div class="abs pg" style="left:651px;top:762px;width:30px;background:transparent;color:#7a7d88"><svg style="margin:10px auto 0" width="10" height="10" viewBox="0 0 10 10" fill="none" stroke="#6f727c" stroke-width="1.3"><path d="M3.5 1.5L7 5 3.5 8.5"/></svg></div>
<div class="abs pg" style="left:682px;top:762px;width:30px;background:transparent;color:#7a7d88"><svg style="margin:10px auto 0" width="14" height="10" viewBox="0 0 14 10" fill="none" stroke="#6f727c" stroke-width="1.3"><path d="M3 1.5L6.5 5 3 8.5M8 1.5L11.5 5 8 8.5"/></svg></div>
<div class="abs" style="left:732px;top:769px;font-size:14px;color:#333;line-height:18px">25</div>
<svg class="abs" style="left:771px;top:774px" width="13" height="8" viewBox="0 0 13 8" fill="none" stroke="#6a6d76" stroke-width="1.3"><path d="M1 1l5.5 5.5L12 1"/></svg>
<div class="abs" style="left:798px;top:770px;font-size:13.5px;color:#212529;line-height:18px;white-space:nowrap">Počet řádků: 31</div>
<div class="abs" style="left:1429px;top:770px;font-size:16px;color:#111;line-height:18px">Σ</div>
<div class="abs" style="left:1474px;top:769px;font-size:14px;font-weight:bold;color:#111;line-height:18px">Upravit</div>
</div>
<!--/TABLE-->
<div class="abs" style="left:1892px;top:527px;width:30px;height:30px;border-radius:50%;background:#3f95c6"></div><svg class="abs" style="left:1902px;top:534px" width="12" height="16" viewBox="0 0 12 16" fill="none" stroke="#fff" stroke-width="2.8" stroke-linecap="round"><path d="M2 4.8A3.9 3.6 0 1 1 7.6 8C6.4 8.8 5.8 9.3 5.8 10.6"/><circle cx="5.8" cy="14" r="1.3" fill="#fff" stroke="none"/></svg>
</body></html>
